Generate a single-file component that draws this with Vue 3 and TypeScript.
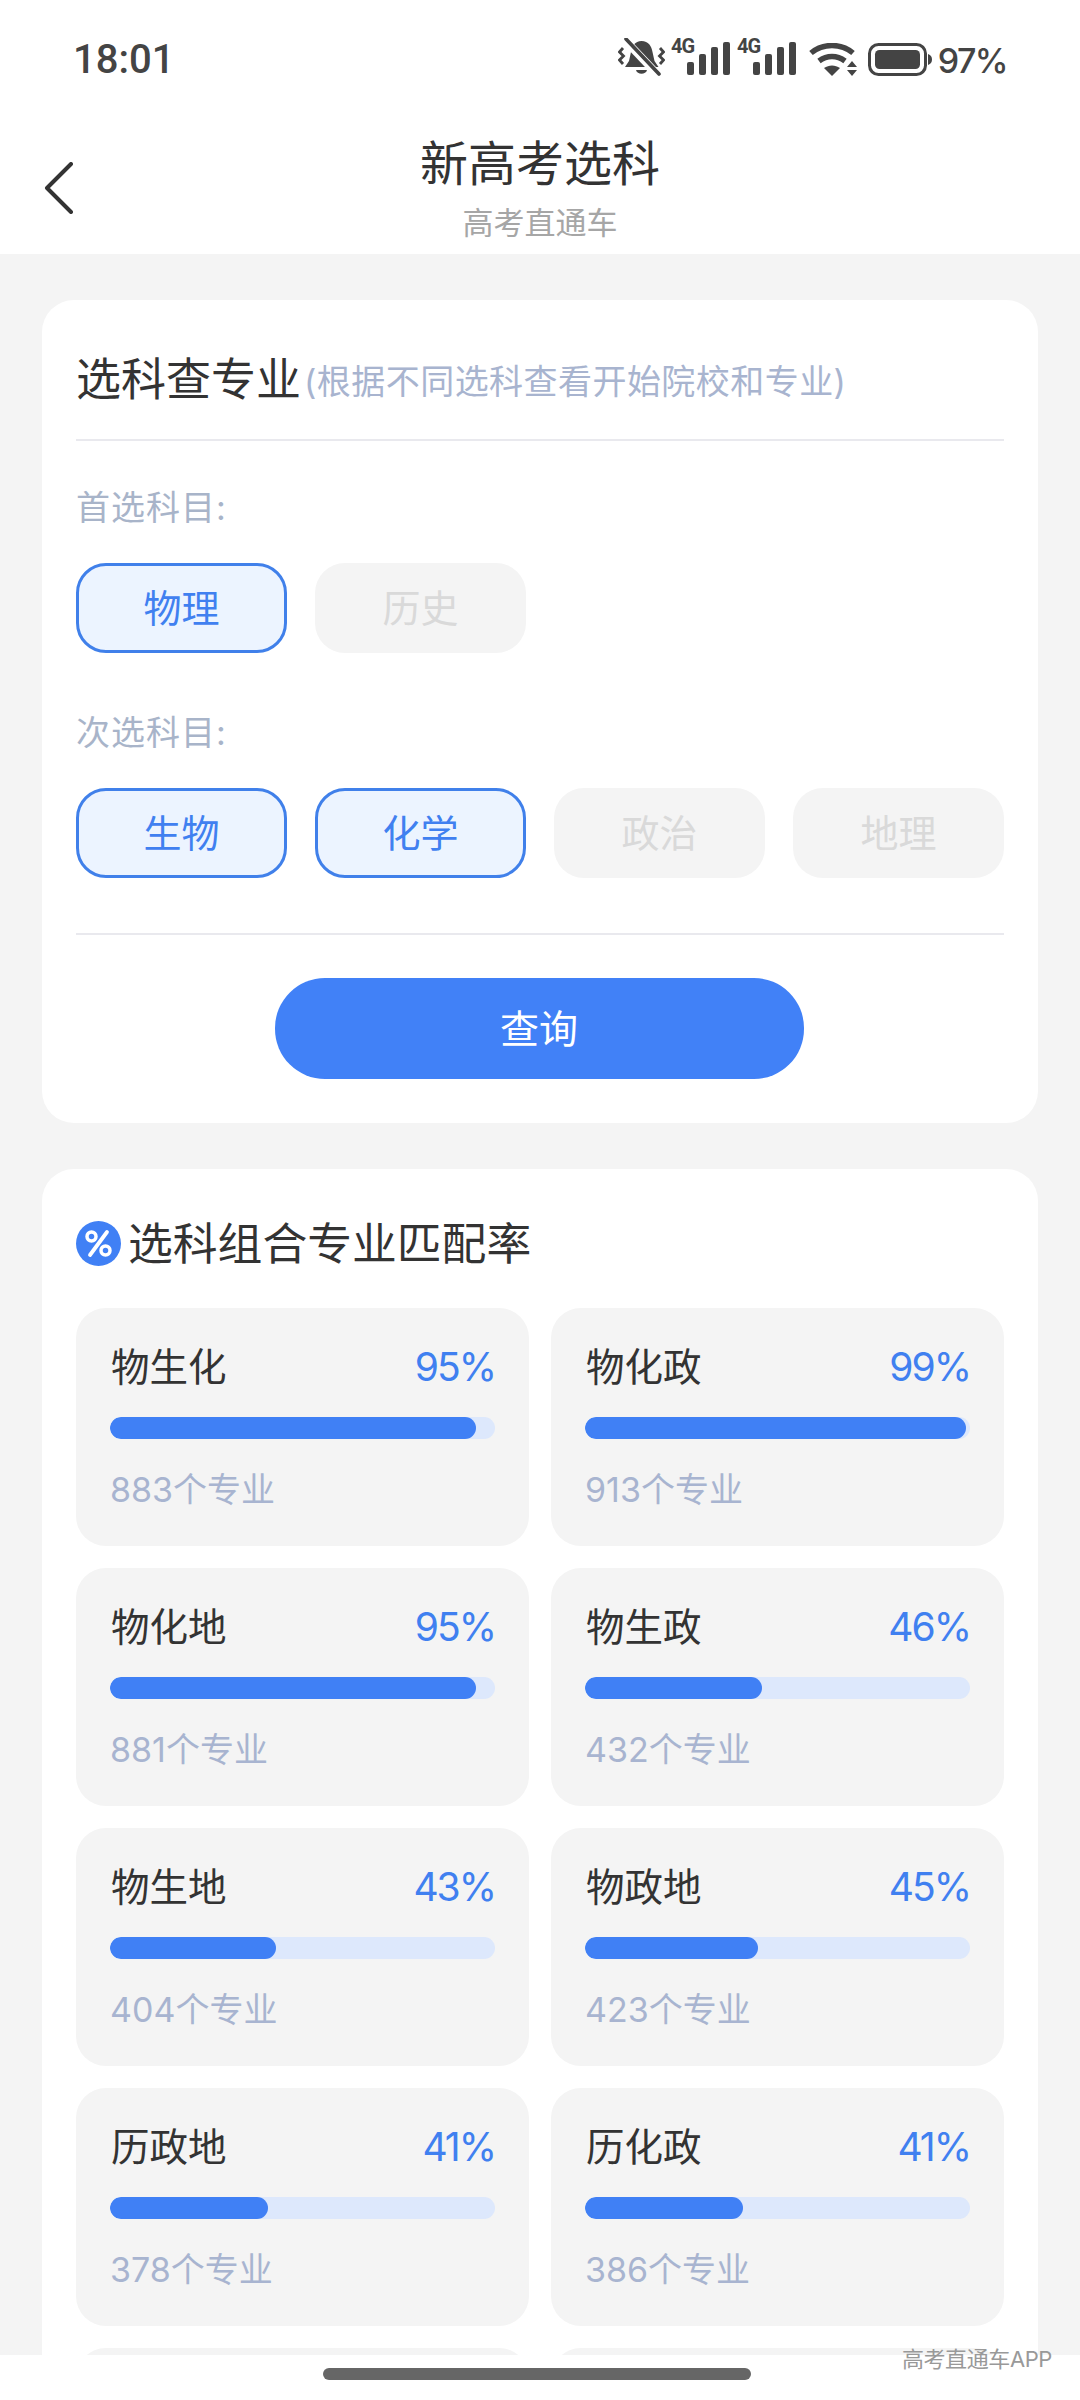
<script setup lang="ts">
interface Combo { name: string; pct: number; count: number }
const combos: Combo[] = [
  { name: '物生化', pct: 95, count: 883 },
  { name: '物化政', pct: 99, count: 913 },
  { name: '物化地', pct: 95, count: 881 },
  { name: '物生政', pct: 46, count: 432 },
  { name: '物生地', pct: 43, count: 404 },
  { name: '物政地', pct: 45, count: 423 },
  { name: '历政地', pct: 41, count: 378 },
  { name: '历化政', pct: 41, count: 386 },
]
const first = [
  { label: '物理', on: true },
  { label: '历史', on: false },
]
const second = [
  { label: '生物', on: true },
  { label: '化学', on: true },
  { label: '政治', on: false },
  { label: '地理', on: false },
]
</script>

<template>
  <div class="page">
    <header class="top">
      <div class="status">
        <span class="time">18:01</span>
        <div class="status-right">
          <svg class="ic-bell" width="47" height="39" viewBox="0 0 47 39">
            <path d="M23.500 3c7 0 10 5 11 11l2 9 4 6H7l4-6 2-9c1-6 4-11 10.500-11z" fill="#444" />
            <path d="M18 32h11c-1 5-10 5-11 0z" fill="#444" />
            <path d="M5 0l36 38" stroke="#fff" stroke-width="8" />
            <path d="M8 1l33 35" stroke="#444" stroke-width="3.600" stroke-linecap="round" />
            <path d="M5 10L1.500 14l4 4-4 4 3.500 4M42 10l3.500 4-4 4 4 4-3.500 4" fill="none" stroke="#444" stroke-width="2.800" />
          </svg>
          <svg v-for="n in 2" :key="n" class="ic-sig" width="60" height="46" viewBox="0 -8 60 46">
            <text x="0" y="14.500" class="g4">4G</text>
            <rect x="16" y="24" width="7" height="13" rx="2" fill="#444" />
            <rect x="28" y="16" width="7" height="21" rx="2" fill="#444" />
            <rect x="40" y="9" width="7" height="28" rx="2" fill="#444" />
            <rect x="52" y="4" width="7" height="33" rx="2" fill="#444" />
          </svg>
          <svg class="ic-wifi" width="48" height="33" viewBox="0 0 48 33">
            <path d="M2 10c12-10 30-10 42 0" fill="none" stroke="#444" stroke-width="5.500" />
            <path d="M10 18c8-6 18-6 26 0" fill="none" stroke="#444" stroke-width="5.500" />
            <path d="M15 25c5-3.500 11-3.500 16 0l-8 8z" fill="#444" />
            <path d="M43 18l5 6H38zM43 33l5-6H38z" fill="#444" />
          </svg>
          <svg class="ic-bat" width="64" height="33" viewBox="0 0 64 33">
            <rect x="1.500" y="1.500" width="56" height="30" rx="9" fill="none" stroke="#444" stroke-width="3" />
            <rect x="7" y="7" width="45" height="19" rx="4.500" fill="#444" />
            <path d="M60 11c3 1 4 3 4 5.500s-1 4.500-4 5.500z" fill="#444" />
          </svg>
          <span class="batt">97%</span>
        </div>
      </div>
      <nav class="nav">
        <svg class="back" width="30" height="52" viewBox="0 0 30 52">
          <path d="M27 2L3 26l24 24" fill="none" stroke="#333" stroke-width="4" stroke-linecap="round" stroke-linejoin="round" />
        </svg>
        <div class="nav-titles">
          <div class="nav-title">新高考选科</div>
          <div class="nav-sub">高考直通车</div>
        </div>
      </nav>
    </header>

    <main class="main">
      <section class="card card-form">
        <div class="form-head">
          <span class="form-title">选科查专业</span>
          <span class="form-hint">(根据不同选科查看开始院校和专业)</span>
        </div>
        <div class="label label-first">首选科目:</div>
        <div class="chips">
          <div v-for="c in first" :key="c.label" class="chip" :class="{ on: c.on }">{{ c.label }}</div>
        </div>
        <div class="label label-second">次选科目:</div>
        <div class="chips">
          <div v-for="c in second" :key="c.label" class="chip" :class="{ on: c.on }">{{ c.label }}</div>
        </div>
        <div class="form-foot">
          <button class="query" type="button">查询</button>
        </div>
      </section>

      <section class="card card-rate">
        <div class="rate-head">
          <svg width="45" height="45" viewBox="0 0 45 45">
            <circle cx="22.500" cy="22.500" r="22.500" fill="#4080f5" />
            <circle cx="15.500" cy="15.500" r="4.500" fill="none" stroke="#fff" stroke-width="3.500" />
            <circle cx="29.500" cy="29.500" r="4.500" fill="none" stroke="#fff" stroke-width="3.500" />
            <path d="M31 11L14 34" stroke="#fff" stroke-width="3.800" stroke-linecap="round" />
          </svg>
          <h2 class="rate-title">选科组合专业匹配率</h2>
        </div>
        <div class="grid">
          <div v-for="c in combos" :key="c.name" class="item">
            <div class="item-top">
              <span class="item-name">{{ c.name }}</span>
              <span class="item-pct">{{ c.pct }}%</span>
            </div>
            <div class="track">
              <div class="fill" :style="{ width: c.pct + '%' }"></div>
            </div>
            <div class="item-count">{{ c.count }}个专业</div>
          </div>
          <div class="item"></div>
          <div class="item"></div>
        </div>
      </section>
    </main>

    <footer class="bottom">
      <div class="home"></div>
      <span class="mark">高考直通车APP</span>
    </footer>
  </div>
</template>

<style>
html, body { margin: 0; background: #fff; }
</style>

<style scoped>
.page {
  position: relative;
  width: 1080px;
  height: 2400px;
  display: flex;
  flex-direction: column;
  overflow: hidden;
  background: #fff;
  font-family: Inter, "Noto Sans CJK SC", sans-serif;
  color: #333;
}
.top { height: 254px; flex: none; background: #fff; }
.status {
  height: 120px;
  padding: 0 73px 0 73px;
  display: flex;
  justify-content: space-between;
  align-items: flex-start;
}
.time {
  margin-top: 35px;
  font-family: Roboto, sans-serif;
  font-size: 40px;
  line-height: 50px;
  font-weight: 500;
  color: #444;
}
.status-right { display: flex; align-items: flex-start; padding-top: 38px; }
.ic-sig { margin: -8px 0 0 6px; }
.ic-sig + .ic-sig { margin-left: 5.500px; }
.ic-wifi { margin: 5px 0 0 12px; }
.ic-bat { margin: 5px 0 0 11px; }
.g4 { font: 700 20px Roboto, sans-serif; fill: #444; letter-spacing: -1px; }
.batt {
  margin: 3px 0 0 6px;
  font-size: 34px;
  line-height: 40px;
  font-weight: 500;
  letter-spacing: -1.600px;
  color: #444;
}
.nav {
  height: 134px;
  position: relative;
  display: flex;
  justify-content: center;
}
.back { position: absolute; left: 44px; top: 42px; }
.nav-titles { text-align: center; }
.nav-title { font-size: 48px; line-height: 70px; margin-top: 9px; color: #333; }
.nav-sub { font-size: 31px; line-height: 44px; margin-top: 2px; color: #a6a6a6; }

.main {
  flex: 1;
  min-height: 0;
  overflow: hidden;
  background: #f4f4f4;
  padding: 46px 42px 0;
  display: flex;
  flex-direction: column;
  gap: 46px;
}
.card { background: #fff; border-radius: 32px; padding: 0 34px; flex: none; }
.card-form { height: 823px; box-sizing: border-box; }
.form-head {
  height: 141px;
  box-sizing: border-box;
  padding-top: 20px;
  border-bottom: 2px solid #e9e9ee;
  display: flex;
  align-items: center;
}
.form-title { font-size: 45px; color: #333; line-height: 60px; }
.form-hint { font-size: 34px; color: #a8b4cf; line-height: 60px; margin: 5px 0 0 3px; letter-spacing: 0.450px; }
.label { font-size: 34px; line-height: 44px; color: #a8b4c9; letter-spacing: 1px; }
.label-first { margin-top: 45px; }
.label-second { margin-top: 58px; }
.chips {
  display: grid;
  grid-template-columns: repeat(4, 211px);
  column-gap: 28px;
  margin-top: 33px;
}
.chip {
  height: 90px;
  box-sizing: border-box;
  padding-bottom: 5px;
  border-radius: 30px;
  background: #f4f4f4;
  color: #d9d9d9;
  font-size: 38px;
  display: flex;
  align-items: center;
  justify-content: center;
}
.chip.on {
  background: #ecf4ff;
  border: 3px solid #4080ea;
  color: #4080f0;
}
.form-foot {
  margin-top: 55px;
  border-top: 2px solid #e9e9ee;
  padding-top: 43px;
  display: flex;
  justify-content: center;
}
.query {
  width: 529px;
  height: 101px;
  margin-right: 2px;
  border: 0;
  padding: 0 0 5px;
  border-radius: 50px;
  background: #4181f7;
  color: #fff;
  font-family: inherit;
  font-size: 39px;
}
.rate-head {
  height: 139px;
  box-sizing: border-box;
  padding-top: 10px;
  display: flex;
  align-items: center;
  gap: 7px;
}
.rate-title { margin: 0; font-size: 44.800px; font-weight: 400; line-height: 60px; color: #333; }
.grid {
  display: grid;
  grid-template-columns: 453px 453px;
  column-gap: 22px;
  row-gap: 22px;
}
.item {
  height: 238px;
  box-sizing: border-box;
  background: #f4f4f4;
  border-radius: 30px;
  padding: 34px 34px 0;
}
.item-top {
  height: 50px;
  display: flex;
  justify-content: space-between;
  align-items: center;
}
.item-name { font-size: 38.500px; line-height: 50px; color: #333; margin-left: 1px; }
.item-pct { font-size: 39px; line-height: 50px; letter-spacing: -2px; color: #4080f0; }
.track {
  margin-top: 25px;
  height: 22px;
  border-radius: 11px;
  background: #dde8fc;
  overflow: hidden;
}
.fill { height: 100%; border-radius: 11px; background: #4080f5; }
.item-count { margin-top: 29px; font-size: 34px; line-height: 44px; color: #a8b4d0; }

.bottom {
  height: 45px;
  flex: none;
  background: #fff;
  display: flex;
  justify-content: center;
}
.home {
  width: 428px;
  height: 12px;
  margin: 13px 6px 0 0;
  border-radius: 6px;
  background: #666;
}
.mark {
  position: absolute;
  right: 28px;
  bottom: 28px;
  font-size: 22px;
  line-height: 26px;
  letter-spacing: -0.4px;
  color: #999;
}
</style>
